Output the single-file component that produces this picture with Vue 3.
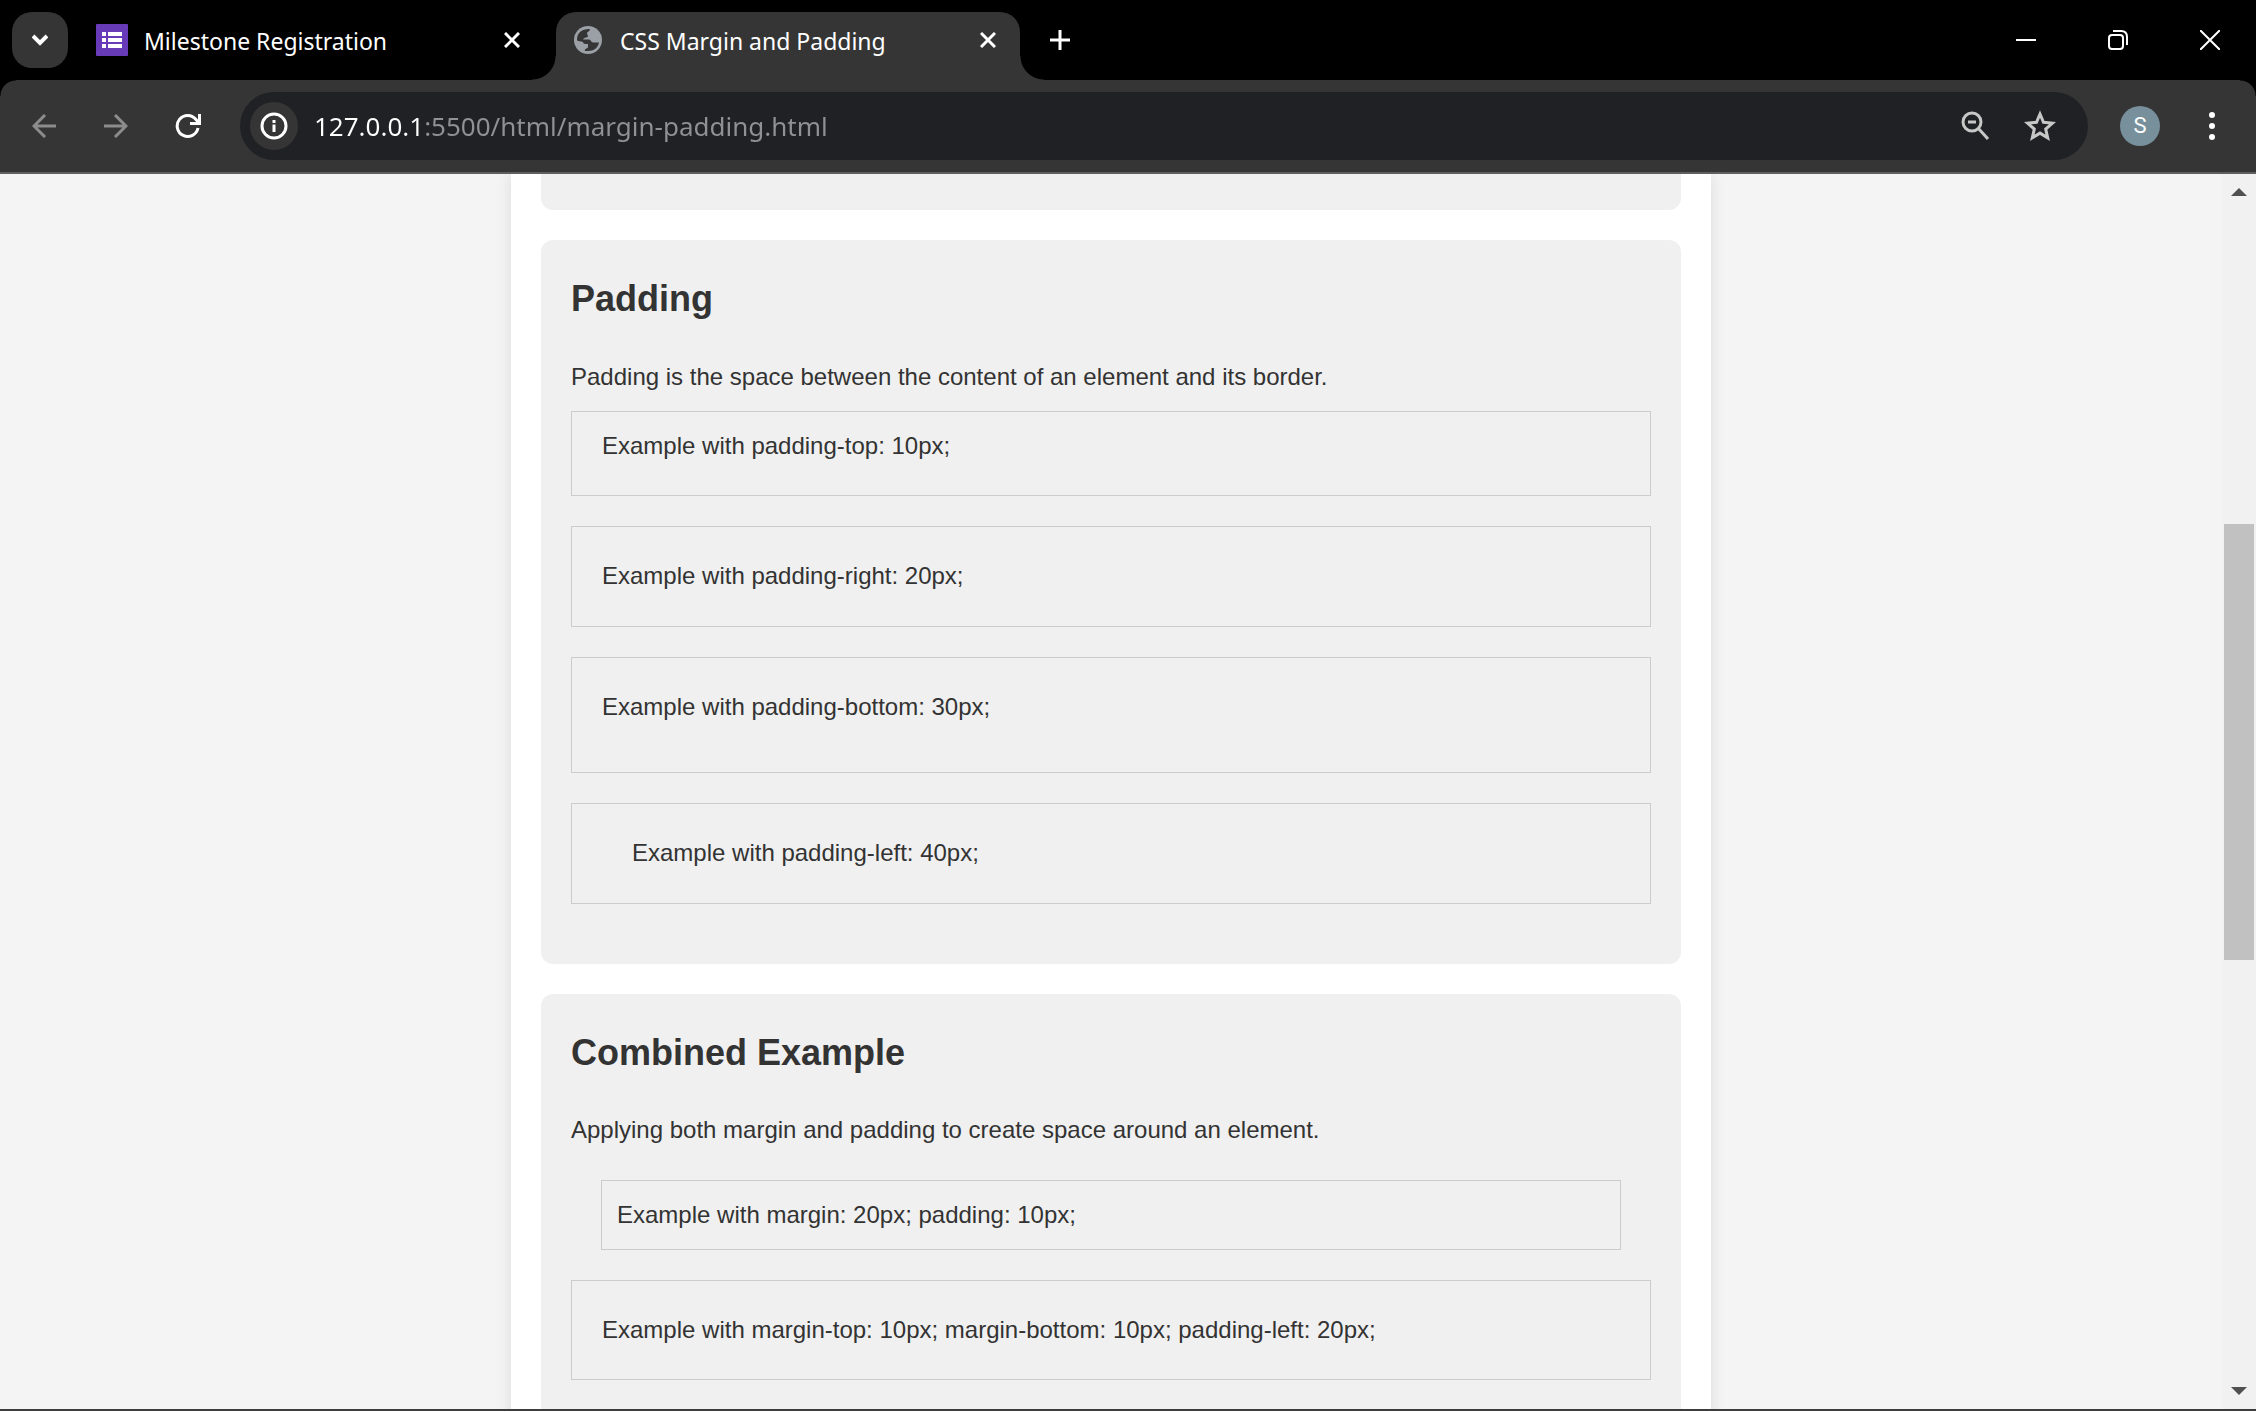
<script setup>
import { ref } from 'vue'

const address = ref('127.0.0.1:5500/html/margin-padding.html')

const sections = [
  {
    title: 'Padding',
    text: 'Padding is the space between the content of an element and its border.',
    examples: [
      { kind: 'padding-top', text: 'Example with padding-top: 10px;' },
      { kind: 'padding-right', text: 'Example with padding-right: 20px;' },
      { kind: 'padding-bottom', text: 'Example with padding-bottom: 30px;' },
      { kind: 'padding-left', text: 'Example with padding-left: 40px;' }
    ]
  },
  {
    title: 'Combined Example',
    text: 'Applying both margin and padding to create space around an element.',
    examples: [
      { kind: 'inset', text: 'Example with margin: 20px; padding: 10px;' },
      { kind: 'stacked', text: 'Example with margin-top: 10px; margin-bottom: 10px; padding-left: 20px;' }
    ]
  }
]
</script>

<template>
  <div class="browser">
    <header class="tab-strip">
      <button class="tab-search" aria-label="Search tabs">
        <svg width="16" height="12" viewBox="0 0 16 12"><path d="M1 2l7 7 7-7" fill="none" stroke="#fff" stroke-width="4" /></svg>
      </button>
      <div class="tab">
        <svg class="favicon" width="32" height="32" viewBox="0 0 32 32">
          <rect width="32" height="32" rx="1" fill="#673ab7" />
          <path d="M6 8h4v4H6zM12 8h14v4H12zM6 14h4v4H6zM12 14h14v4H12zM6 20h4v4H6zM12 20h14v4H12z" fill="#fff" />
        </svg>
        <button class="tab-title">Milestone Registration</button>
        <button class="tab-close" aria-label="Close tab">
          <svg width="16" height="16" viewBox="0 0 16 16"><path d="M1 1l14 14M15 1L1 15" stroke="#fff" stroke-width="3" /></svg>
        </button>
      </div>
      <div class="tab active">
        <svg class="favicon" width="32" height="32" viewBox="0 0 32 32">
          <circle cx="16" cy="16" r="14" fill="#9aa0a6" />
          <path d="M5 15.500C5 9 10 5 17 5l1 .5c0 2-3 2-3 4 0 1 1 1.500 1 2.500 0 2-4 1-5 3.500h6c2 0 2 3 4 3h6c-1 5-5 8.500-11 8.500h-3c-1-3 3-2 3-4v-3c-3 0-5 0-5-2-2-1-6 0-6-2.500z" fill="#353535" />
        </svg>
        <button class="tab-title">CSS Margin and Padding</button>
        <button class="tab-close" aria-label="Close tab">
          <svg width="16" height="16" viewBox="0 0 16 16"><path d="M1 1l14 14M15 1L1 15" stroke="#fff" stroke-width="3" /></svg>
        </button>
      </div>
      <button class="new-tab" aria-label="New tab">
        <svg width="20" height="20" viewBox="0 0 20 20"><path d="M10 0v20M0 10h20" stroke="#fff" stroke-width="3" /></svg>
      </button>
      <div class="window-controls">
        <button aria-label="Minimize"><svg width="20" height="20" viewBox="0 0 20 20"><path d="M0 10h20" stroke="#fff" stroke-width="2" /></svg></button>
        <button aria-label="Restore">
          <svg width="20" height="20" viewBox="0 0 20 20" fill="none" stroke="#fff" stroke-width="2">
            <rect x="1" y="5" width="14" height="14" rx="3" />
            <path d="M5 1h8c4 0 6 2 6 6v8" />
          </svg>
        </button>
        <button aria-label="Close"><svg width="20" height="20" viewBox="0 0 20 20"><path d="M0 0l20 20M20 0L0 20" stroke="#fff" stroke-width="2" /></svg></button>
      </div>
    </header>

    <div class="toolbar">
      <nav class="history">
        <button aria-label="Back"><svg width="24" height="24" viewBox="0 0 24 24" fill="none" stroke="#8c8c8c" stroke-width="3"><path d="M13 1L2 12l11 11M2 12h22" /></svg></button>
        <button aria-label="Forward"><svg width="24" height="24" viewBox="0 0 24 24" fill="none" stroke="#8c8c8c" stroke-width="3"><path d="M11 1l11 11-11 11M22 12H0" /></svg></button>
        <button aria-label="Reload">
          <svg width="26" height="26" viewBox="0 0 26 26" fill="none" stroke="#fff" stroke-width="3">
            <path d="M23 15a10.500 10.500 0 1 1-2-8.500l3 3.500M24.500 1v9.500H15" />
          </svg>
        </button>
      </nav>
      <div class="omnibox">
        <button class="site-info" aria-label="Site information">
          <svg width="28" height="28" viewBox="0 0 28 28"><circle cx="14" cy="14" r="12" fill="none" stroke="#fff" stroke-width="3" /><path d="M12.500 12.500h3V20h-3zM12.500 8h3v3h-3z" fill="#fff" /></svg>
        </button>
        <input v-model="address" class="address" type="text" aria-label="Address" spellcheck="false" />
        <button class="omni-action" aria-label="Zoom">
          <svg width="32" height="32" viewBox="0 0 32 32" fill="none" stroke="#c7c7c7" stroke-width="3"><circle cx="12" cy="12" r="9" /><path d="M8 12h8M18 18l10 11" /></svg>
        </button>
        <button class="omni-action" aria-label="Bookmark this tab">
          <svg width="32" height="32" viewBox="0 0 32 32" fill="none" stroke="#c7c7c7" stroke-width="3"><path d="M16 4l3.500 8.300 9 .8-6.800 5.900 2 8.800L16 23.100l-7.700 4.700 2-8.800-6.800-5.900 9-.8z" /></svg>
        </button>
      </div>
      <button class="avatar">S</button>
      <button class="menu" aria-label="Menu">
        <svg width="6" height="28" viewBox="0 0 6 28" fill="#fff"><circle cx="3" cy="3" r="3" /><circle cx="3" cy="14" r="3" /><circle cx="3" cy="25" r="3" /></svg>
      </button>
    </div>

    <div class="viewport">
      <div class="page">
        <main class="container">
          <section class="card card-tail"></section>
          <section v-for="section in sections" :key="section.title" class="card">
            <h2>{{ section.title }}</h2>
            <p>{{ section.text }}</p>
            <div v-for="example in section.examples" :key="example.kind" class="example" :class="example.kind">{{ example.text }}</div>
          </section>
        </main>
      </div>
      <div class="scrollbar">
        <button aria-label="Scroll up"><svg width="16" height="8" viewBox="0 0 16 8"><path d="M8 0l8 8H0z" fill="#505050" /></svg></button>
        <div class="thumb"></div>
        <button aria-label="Scroll down"><svg width="16" height="8" viewBox="0 0 16 8"><path d="M0 0h16L8 8z" fill="#505050" /></svg></button>
      </div>
    </div>
  </div>
</template>

<style>
body {
  margin: 0;
  background: #fff;
}
</style>

<style scoped>
.browser {
  display: flex;
  flex-direction: column;
  box-sizing: border-box;
  height: 100vh;
  padding-bottom: 1px;
  background: #fff;
  font-family: "Noto Sans", "Open Sans", sans-serif;
}

button {
  display: flex;
  align-items: center;
  justify-content: center;
  padding: 0;
  border: 0;
  background: none;
  color: #fff;
  font: inherit;
}

svg {
  display: block;
  flex: none;
}

.tab-strip {
  display: flex;
  flex: none;
  align-items: flex-start;
  height: 80px;
  padding: 12px 0 0 12px;
  box-sizing: border-box;
  background: #000;
}

.tab-search {
  width: 56px;
  height: 56px;
  margin-right: 12px;
  border-radius: 20px;
  background: #353535;
}

.tab {
  display: flex;
  align-items: center;
  box-sizing: border-box;
  width: 476px;
  height: 56px;
  padding: 0 36px 0 16px;
}

.tab.active {
  position: relative;
  width: 464px;
  height: 68px;
  padding: 0 24px 12px 16px;
  border-radius: 20px 20px 0 0;
  background: #353535;
}

.tab.active::before,
.tab.active::after {
  content: "";
  position: absolute;
  bottom: 0;
  width: 24px;
  height: 24px;
}

.tab.active::before {
  right: 100%;
  background: radial-gradient(circle at 0 0, #000 23px, #353535 24px);
}

.tab.active::after {
  left: 100%;
  background: radial-gradient(circle at 100% 0, #000 23px, #353535 24px);
}

.tab-title {
  flex: 1;
  justify-content: flex-start;
  padding-top: 2px;
  margin-left: 16px;
  font-size: 23px;
  line-height: 32px;
  white-space: nowrap;
}

.new-tab {
  width: 56px;
  height: 56px;
  margin-left: 12px;
}

.window-controls {
  display: flex;
  margin-left: auto;
}

.window-controls button {
  width: 92px;
  height: 56px;
}

.toolbar {
  display: flex;
  flex: none;
  align-items: center;
  height: 92px;
  border-bottom: 2px solid #5f5f5f;
  background: radial-gradient(circle at 16px 16px, #353535 15px, #000 16px) 0 0 / 16px 16px no-repeat,
    radial-gradient(circle at 0 16px, #353535 15px, #000 16px) 100% 0 / 16px 16px no-repeat, #353535;
}

.history {
  display: flex;
  padding: 0 16px 0 8px;
}

.history button {
  width: 72px;
  height: 68px;
}

.omnibox {
  display: flex;
  flex: 1;
  align-items: center;
  height: 68px;
  box-sizing: border-box;
  padding: 0 16px 0 10px;
  border-radius: 34px;
  background: #202124;
}

.site-info {
  width: 48px;
  height: 48px;
  border-radius: 50%;
  background: #353535;
}

.address {
  flex: 1;
  min-width: 0;
  height: 48px;
  padding: 0;
  margin-left: 16px;
  border: 0;
  outline: 0;
  background: linear-gradient(90deg, #fff 108px, #8f9194 108px);
  background-clip: text;
  -webkit-background-clip: text;
  color: #8f9194;
  -webkit-text-fill-color: transparent;
  font: 26px/48px "Noto Sans", "Open Sans", sans-serif;
}

.omni-action {
  width: 64px;
  height: 48px;
}

.avatar {
  width: 40px;
  height: 40px;
  margin-left: 32px;
  border-radius: 50%;
  background: #78909c;
  font: 22px/40px Roboto, sans-serif;
}

.menu {
  width: 56px;
  height: 56px;
  margin: 0 16px 0 24px;
}

.viewport {
  display: flex;
  flex: 1;
  min-height: 0;
  overflow: hidden;
  border-bottom: 2px solid #3c3d3f;
}

.page {
  flex: 1;
  overflow: hidden;
  background: #f4f4f4;
  color: #333;
  font: 24px/1.6 "Liberation Sans", Arial, sans-serif;
}

.container {
  box-sizing: border-box;
  max-width: 1200px;
  margin: 0 auto;
  padding: 0 30px 30px;
  background: #fff;
  box-shadow: 0 0 15px rgba(0, 0, 0, 0.1);
}

.card {
  margin-bottom: 30px;
  padding: 30px;
  border-radius: 12px;
  background: #f0f0f0;
}

.card-tail {
  padding: 18px;
  border-radius: 0 0 12px 12px;
}

.card h2 {
  margin: 0 0 30px;
  font-size: 36px;
}

.card p {
  margin: 0 0 15px;
}

.example {
  margin-bottom: 30px;
  padding: 30px;
  border: 1px solid #ccc;
}

.padding-top {
  padding-top: 15px;
}

.padding-bottom {
  padding-bottom: 46px;
}

.padding-left {
  padding-left: 60px;
}

.inset {
  margin: 30px;
  padding: 15px;
}

.scrollbar {
  display: grid;
  grid-template-rows: 36px 314fr 436fr 413fr 36px;
  width: 34px;
  background: #f1f1f1;
}

.scrollbar button:last-child {
  grid-row: 5;
}

.thumb {
  grid-row: 3;
  margin: 0 2px;
  background: #c1c1c1;
}
</style>
